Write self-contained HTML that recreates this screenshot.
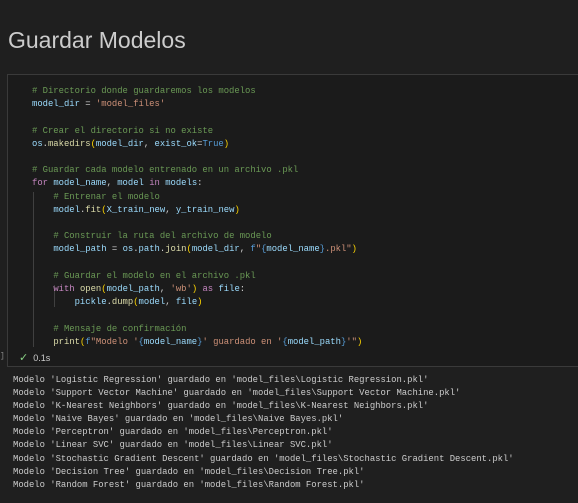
<!DOCTYPE html>
<html><head><meta charset="utf-8"><style>
html,body{margin:0;padding:0;background:#1f1f1f;width:578px;height:503px;overflow:hidden}
body{position:relative;font-family:"Liberation Mono",monospace}
.t{position:absolute;left:8px;top:27px;font-family:"Liberation Sans",sans-serif;font-size:23px;color:#cccccc}
.cell{position:absolute;left:7px;top:74px;width:600px;height:291px;border:1px solid #3a3a3a;background:#1b1b1b}
pre{margin:0;position:absolute;left:32px;top:85px;font-family:"Liberation Mono",monospace;font-size:8.9px;line-height:13.2px;color:#d4d4d4}
.c{color:#6a9955}.v{color:#9cdcfe}.s{color:#ce9178}.f{color:#dcdcaa}.k{color:#c586c0}.b{color:#569cd6}.y{color:#ffd700}.p{color:#da70d6}
.g{position:absolute;width:1px;background:#404040}
.out{position:absolute;left:13px;top:374px;margin:0;font-family:"Liberation Mono",monospace;font-size:8.9px;line-height:13.1px;color:#cccccc}
.st{position:absolute;left:19px;top:351px;font-size:9px;color:#ccc;font-family:"Liberation Sans",sans-serif}
</style></head><body>
<div class="t">Guardar Modelos</div>
<div class="cell"></div>
<div class="g" style="left:33px;top:192px;height:155px"></div>
<div class="g" style="left:54px;top:285px;height:22px"></div>
<div style="position:absolute;left:0;top:352px;font-size:8px;color:#888">]</div>
<pre><span class="c"># Directorio donde guardaremos los modelos</span>
<span class="v">model_dir</span> = <span class="s">'model_files'</span>

<span class="c"># Crear el directorio si no existe</span>
<span class="v">os</span>.<span class="f">makedirs</span><span class="y">(</span><span class="v">model_dir</span>, <span class="v">exist_ok</span>=<span class="b">True</span><span class="y">)</span>

<span class="c"># Guardar cada modelo entrenado en un archivo .pkl</span>
<span class="k">for</span> <span class="v">model_name</span>, <span class="v">model</span> <span class="k">in</span> <span class="v">models</span>:
    <span class="c"># Entrenar el modelo</span>
    <span class="v">model</span>.<span class="f">fit</span><span class="y">(</span><span class="v">X_train_new</span>, <span class="v">y_train_new</span><span class="y">)</span>

    <span class="c"># Construir la ruta del archivo de modelo</span>
    <span class="v">model_path</span> = <span class="v">os</span>.<span class="v">path</span>.<span class="f">join</span><span class="y">(</span><span class="v">model_dir</span>, <span class="b">f</span><span class="s">"</span><span class="b">{</span><span class="v">model_name</span><span class="b">}</span><span class="s">.pkl"</span><span class="y">)</span>

    <span class="c"># Guardar el modelo en el archivo .pkl</span>
    <span class="k">with</span> <span class="f">open</span><span class="y">(</span><span class="v">model_path</span>, <span class="s">'wb'</span><span class="y">)</span> <span class="k">as</span> <span class="v">file</span>:
        <span class="v">pickle</span>.<span class="f">dump</span><span class="y">(</span><span class="v">model</span>, <span class="v">file</span><span class="y">)</span>

    <span class="c"># Mensaje de confirmación</span>
    <span class="f">print</span><span class="y">(</span><span class="b">f</span><span class="s">"Modelo '</span><span class="b">{</span><span class="v">model_name</span><span class="b">}</span><span class="s">' guardado en '</span><span class="b">{</span><span class="v">model_path</span><span class="b">}</span><span class="s">'"</span><span class="y">)</span></pre>
<div class="st"><span style="color:#89d185;font-size:11px">✓</span>&nbsp;&nbsp;0.1s</div>
<pre class="out">Modelo 'Logistic Regression' guardado en 'model_files\Logistic Regression.pkl'
Modelo 'Support Vector Machine' guardado en 'model_files\Support Vector Machine.pkl'
Modelo 'K-Nearest Neighbors' guardado en 'model_files\K-Nearest Neighbors.pkl'
Modelo 'Naive Bayes' guardado en 'model_files\Naive Bayes.pkl'
Modelo 'Perceptron' guardado en 'model_files\Perceptron.pkl'
Modelo 'Linear SVC' guardado en 'model_files\Linear SVC.pkl'
Modelo 'Stochastic Gradient Descent' guardado en 'model_files\Stochastic Gradient Descent.pkl'
Modelo 'Decision Tree' guardado en 'model_files\Decision Tree.pkl'
Modelo 'Random Forest' guardado en 'model_files\Random Forest.pkl'</pre>
</body></html>
